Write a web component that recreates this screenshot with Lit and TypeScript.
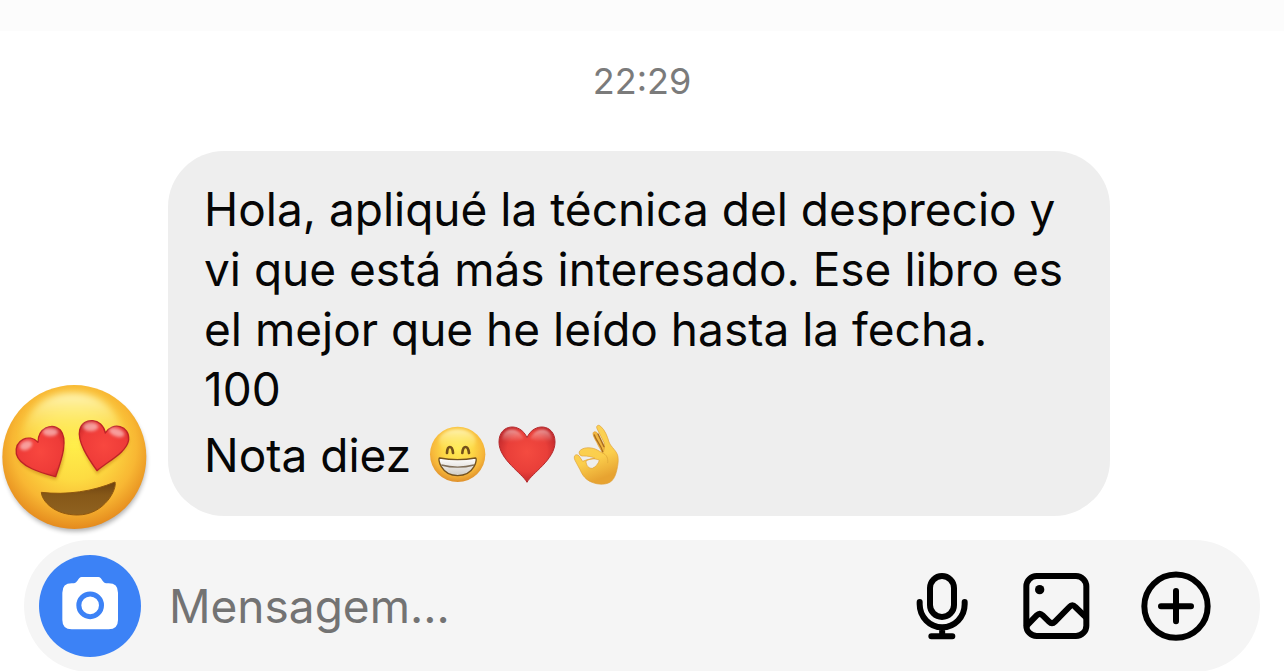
import { LitElement, html, css } from "lit";
import { customElement } from "lit/decorators.js";

@customElement("app-root")
class AppRoot extends LitElement {
  static styles = css`
    :host { display: flex; flex-direction: column; min-height: 100vh; background: #fff; color: #060606; font-family: Inter, "Liberation Sans", sans-serif; overflow: hidden; }
    * { box-sizing: border-box; }
    .header { height: 31px; background: #fcfcfc; flex: none; }
    .time { margin-top: 26px; text-align: center; font-size: 36px; line-height: 48px; color: #7b7b7b; }
    .message { display: flex; align-items: flex-end; margin-top: 46px; padding-right: 174px; }
    .reaction { flex: none; width: 168px; height: 160px; margin-bottom: -24px; }
    .bubble { flex: 1; min-width: 0; background: #eee; border-radius: 56px; padding: 28px 36px 25px; }
    .bubble p { margin: 0; font-size: 46px; line-height: 60px; }
    .bubble .rating { display: flex; align-items: center; line-height: 72px; gap: 4px; }
    .label { margin-right: 10px; }
    .emoji { width: 66px; height: 72px; flex: none; }
    .composer { margin: 24px 24px 0; height: 132px; border-radius: 66px; background: #f5f5f5; display: flex; align-items: center; padding: 0 49px 0 15px; }
    button { border: 0; padding: 0; background: none; color: #000; display: block; flex: none; cursor: pointer; }
    svg { display: block; }
    .camera { width: 102px; height: 102px; border-radius: 50%; background: #3c82f6; }
    .field { flex: 1; min-width: 0; border: 0; outline: 0; background: none; margin: 0 24px 0 28px; padding: 0; font: 46px/60px Inter, "Liberation Sans", sans-serif; }
    .field::placeholder { color: #737373; opacity: 1; }
    .actions { display: flex; gap: 50px; }
    .icon { width: 70px; height: 70px; fill: none; stroke: #000; stroke-width: 18; stroke-linecap: round; stroke-linejoin: round; }
  `;

  private heartEyes() {
    return html`<svg class="reaction" viewBox="0 0 504 480" role="img" aria-label="Smiling face with heart eyes">
      <defs>
        <radialGradient id="face" cx="0.5" cy="0.42" r="0.6">
          <stop offset="0" stop-color="#ffee4a" /><stop offset="0.4" stop-color="#fddb42" /><stop offset="0.72" stop-color="#f8b733" /><stop offset="1" stop-color="#e2841a" />
        </radialGradient>
        <linearGradient id="shine" x1="0" y1="0" x2="0" y2="1">
          <stop offset="0" stop-color="#fffac8" stop-opacity="0.9" /><stop offset="1" stop-color="#fff04f" stop-opacity="0" />
        </linearGradient>
        <radialGradient id="eye" cx="0.5" cy="0.5" r="0.6">
          <stop offset="0" stop-color="#f8473f" /><stop offset="0.75" stop-color="#ee3b38" /><stop offset="1" stop-color="#cf2a2b" />
        </radialGradient>
        <linearGradient id="mouth" x1="0" y1="0" x2="0" y2="1">
          <stop offset="0" stop-color="#6c4110" /><stop offset="0.4" stop-color="#865818" /><stop offset="1" stop-color="#8f6220" />
        </linearGradient>
        <filter id="soft" x="-20%" y="-20%" width="140%" height="140%"><feGaussianBlur stdDeviation="8" /></filter>
        <filter id="glow" x="-20%" y="-20%" width="140%" height="140%"><feGaussianBlur stdDeviation="5" /></filter>
        <filter id="haze" x="-20%" y="-20%" width="140%" height="140%"><feGaussianBlur stdDeviation="11" /></filter>
      </defs>
      <circle cx="226" cy="242" r="212" fill="#000" opacity="0.32" filter="url(#soft)" />
      <circle cx="223" cy="231" r="216" fill="url(#face)" />
      <path d="M64 165C86 76 142 39 218 39C294 39 348 78 374 165C340 215 98 215 64 165Z" fill="url(#shine)" filter="url(#haze)" />
      <g fill="#b86a10" opacity="0.45" filter="url(#glow)">
        <path d="M168 300C130 288 64 270 53 230L192 200C196 235 184 268 168 300Z" />
        <path d="M291 283C265 245 236 200 241 160L388 176C382 222 330 250 291 283Z" />
      </g>
      <g fill="url(#eye)" stroke="#bd2326" stroke-width="4" stroke-linejoin="round">
        <path d="M167 290C130 280 59 262 49 222C43 180 88 159 114 187C114 145 155 126 181 150C206 180 184 240 167 290Z" />
        <path d="M291 272C265 235 231 185 239 150C249 110 307 112 316 159C337 123 390 137 386 180C380 216 330 240 291 272Z" />
      </g>
      <g fill="#fff" opacity="0.5" filter="url(#glow)">
        <ellipse cx="78" cy="196" rx="20" ry="13" transform="rotate(-25 78 196)" /><ellipse cx="151" cy="156" rx="23" ry="12" />
        <ellipse cx="272" cy="140" rx="23" ry="13" /><ellipse cx="350" cy="157" rx="24" ry="12" transform="rotate(20 350 157)" />
      </g>
      <path d="M124 337C200 346 280 334 345 306C352 325 315 405 232 405C165 405 126 365 124 337Z" fill="url(#mouth)" stroke="#8e560f" stroke-width="3" stroke-linejoin="round" />
    </svg>`;
  }

  private grin() {
    return html`<svg class="emoji" viewBox="0 -3 198 216" role="img" aria-label="Beaming face">
      <defs>
        <radialGradient id="gface" cx="0.5" cy="0.4" r="0.62">
          <stop offset="0" stop-color="#ffeb55" /><stop offset="0.45" stop-color="#fdd645" /><stop offset="0.76" stop-color="#f6b63a" /><stop offset="1" stop-color="#dc8b2a" />
        </radialGradient>
        <linearGradient id="gshine" x1="0" y1="0" x2="0" y2="1">
          <stop offset="0" stop-color="#fff9cc" stop-opacity="0.8" /><stop offset="1" stop-color="#fff468" stop-opacity="0" />
        </linearGradient>
        <linearGradient id="teeth" x1="0" y1="0" x2="0" y2="1"><stop offset="0" stop-color="#fff" /><stop offset="1" stop-color="#cfcbc4" /></linearGradient>
        <filter id="gblur" x="-20%" y="-20%" width="140%" height="140%"><feGaussianBlur stdDeviation="5" /></filter>
      </defs>
      <circle cx="98" cy="103" r="83" fill="url(#gface)" />
      <ellipse cx="97" cy="63" rx="55" ry="35" fill="url(#gshine)" filter="url(#gblur)" />
      <g fill="none" stroke="#74501a" stroke-width="8" stroke-linecap="round">
        <path d="M66 99C67 75 82 75 84 99" /><path d="M112 99C114 75 129 75 132 99" />
      </g>
      <path d="M44 114Q98 124 151 114C159 113 150 167 98 167C46 167 37 113 44 114Z" fill="url(#teeth)" stroke="#75531f" stroke-width="4" stroke-linejoin="round" />
      <path d="M49 135Q98 148 147 135" fill="none" stroke="#81705a" stroke-width="4" />
    </svg>`;
  }

  private heart() {
    return html`<svg class="emoji" viewBox="0 -3 198 216" role="img" aria-label="Red heart">
      <defs>
        <radialGradient id="red" cx="0.5" cy="0.45" r="0.6">
          <stop offset="0" stop-color="#f44b40" /><stop offset="0.6" stop-color="#e93f39" /><stop offset="1" stop-color="#b92429" />
        </radialGradient>
        <linearGradient id="hshine" x1="0" y1="0" x2="0" y2="1"><stop offset="0" stop-color="#fff" stop-opacity="0.5" /><stop offset="1" stop-color="#fff" stop-opacity="0" /></linearGradient>
        <filter id="hblur" x="-20%" y="-20%" width="140%" height="140%"><feGaussianBlur stdDeviation="3" /></filter>
      </defs>
      <path d="M96 187C82 160 12 119 12 66C12 11 76 6 96 53C116 6 180 11 180 66C180 119 110 160 96 187Z" fill="url(#red)" stroke="#b3282c" stroke-width="3" stroke-linejoin="round" />
      <path d="M21 60C22 19 71 18 86 56Q52 73 21 60ZM106 56C121 18 170 19 171 60Q140 73 106 56Z" fill="url(#hshine)" filter="url(#hblur)" />
    </svg>`;
  }

  private okHand() {
    return html`<svg class="emoji" viewBox="-9 -3 198 216" role="img" aria-label="OK hand">
      <defs>
        <linearGradient id="skin" x1="0" y1="0" x2="0.3" y2="1"><stop offset="0" stop-color="#fbd357" /><stop offset="0.65" stop-color="#fbce4c" /><stop offset="1" stop-color="#e7a331" /></linearGradient>
      </defs>
      <g stroke="#e0a038" stroke-width="2" stroke-linejoin="round">
        <path d="M75 41C75 33 86 33 90 42L112 83L104 100L91 77C86 64 75 51 75 41Z" fill="#f0b63f" />
        <path fill-rule="evenodd" d="M87 26C83 18 91 12 98 19C111 30 118 49 123 66C129 82 148 93 150 111C152 125 149 137 147 148C144 162 140 174 131 183C118 195 91 195 72 187C54 180 43 166 36 149L21 121C13 104 29 98 36 112L44 124C56 119 68 116 81 115C70 109 57 108 47 108C34 110 29 96 38 90C50 80 74 82 88 90L104 99C110 88 111 79 108 68ZM54 123C54 136 62 146 73 145C84 141 91 130 94 121C81 114 66 116 54 123Z" fill="url(#skin)" />
      </g>
      <path d="M79 45C86 65 98 73 104 95M90 42L108 80" fill="none" stroke="#a96b1e" stroke-width="4" stroke-linecap="round" />
      <path d="M104 99C116 104 121 115 119 128" fill="none" stroke="#e5ae3b" stroke-width="3" stroke-linecap="round" />
    </svg>`;
  }

  render() {
    return html`
      <header class="header"></header>
      <time class="time">22:29</time>
      <div class="message">
        ${this.heartEyes()}
        <div class="bubble">
          <p>Hola, apliqué la técnica del desprecio y vi que está más interesado. Ese libro es el mejor que he leído hasta la fecha.<br />100</p>
          <p class="rating"><span class="label">Nota diez</span>${this.grin()}${this.heart()}${this.okHand()}</p>
        </div>
      </div>
      <form class="composer">
        <button class="camera" type="button" aria-label="Camera">
          <svg viewBox="117 555 306 306" width="102" height="102">
            <path d="M245 621H295C306 621 307 640 319 640H326Q354 640 354 668V750Q354 778 326 778H215Q187 778 187 750V668Q187 640 215 640H221C233 640 234 621 245 621Z" fill="#fff" />
            <circle cx="270.500" cy="706" r="34" fill="none" stroke="#3c82f6" stroke-width="15" />
          </svg>
        </button>
        <input class="field" type="text" aria-label="Mensagem" placeholder="Mensagem..." />
        <div class="actions">
          <button type="button" aria-label="Microphone">
            <svg class="icon" viewBox="33 93 210 210">
              <rect x="120" y="108" width="72" height="123" rx="36" />
              <path d="M89 186V193A67.500 69 0 0 0 224 193V186M156.500 262V288M124 289H187" />
            </svg>
          </button>
          <button type="button" aria-label="Gallery">
            <svg class="icon" viewBox="393 93 210 210">
              <rect x="409" y="108" width="180" height="180" rx="31" />
              <path d="M411 256L440 226Q449 217 458 226L477 245Q486 254 495 245L538 201Q547 191 556 201L587 231" />
              <circle cx="449" cy="149" r="14" fill="#000" stroke="none" />
            </svg>
          </button>
          <button type="button" aria-label="Add">
            <svg class="icon" viewBox="753 93 210 210"><circle cx="858" cy="198.500" r="95" /><path d="M858 153V244M813 198.500H903" /></svg>
          </button>
        </div>
      </form>`;
  }
}
